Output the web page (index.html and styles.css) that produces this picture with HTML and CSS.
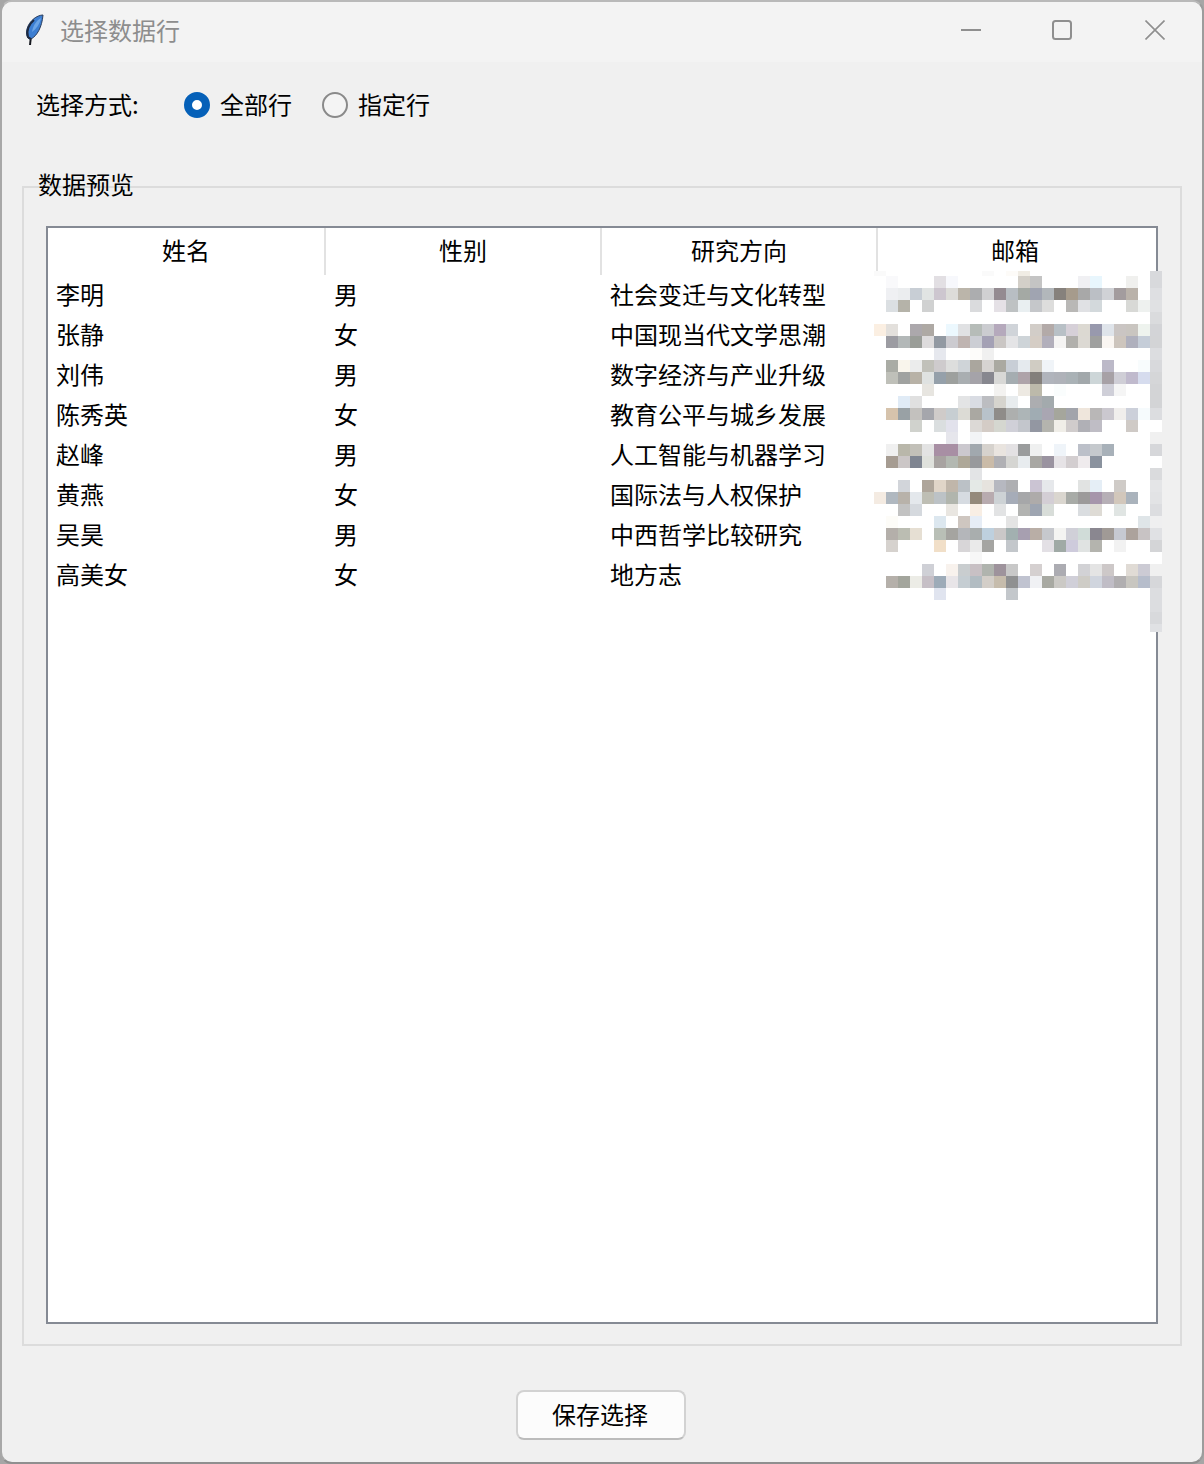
FILE: index.html
```html
<!DOCTYPE html>
<html lang="zh-CN">
<head>
<meta charset="utf-8">
<title>选择数据行</title>
<link rel="stylesheet" href="styles.css">
</head>
<body>
<div class="window">
  <header class="titlebar">
    <svg class="app-icon" width="20" height="32" viewBox="0 0 20 32" aria-hidden="true">
      <path class="quill" d="M6 31 L7 22"/>
      <path class="vane" d="M19 1 C13 1 5 7 3 15 C2 19 2.5 23 5 25 L7 25 C13 22 18 13 19 1Z"/>
      <path class="vane-light" d="M17 4 C13 6 9 11 8 18 C12 15 16 10 17 4Z"/>
      <path class="vane-edge" d="M10 6 C5 10 2 17 4 23 L7 25"/>
    </svg>
    <span class="title">选择数据行</span>
    <div class="caption">
      <svg class="cap-icon" width="20" height="20" viewBox="0 0 20 20" aria-hidden="true"><path d="M0 10H20"/></svg>
      <svg class="cap-icon" width="20" height="20" viewBox="0 0 20 20" aria-hidden="true"><rect x="1" y="1" width="18" height="18" rx="2.5"/></svg>
      <svg class="cap-icon thin" width="20" height="20" viewBox="0 0 20 20" aria-hidden="true"><path d="M0.5 0.5L19.5 19.5M19.5 0.5L0.5 19.5"/></svg>
    </div>
  </header>

  <main class="content">
    <div class="mode">
      <span class="mode-label">选择方式:</span>
      <label class="radio"><span class="dot dot-on"></span><span class="radio-text">全部行</span></label>
      <label class="radio"><span class="dot"></span><span class="radio-text">指定行</span></label>
    </div>

    <section class="group">
      <span class="legend">数据预览</span>
      <div class="tree">
        <table class="grid">
          <thead>
            <tr><th class="c1">姓名</th><th class="c2">性别</th><th class="c3">研究方向</th><th class="c4">邮箱</th></tr>
          </thead>
          <tbody>
            <tr><td>李明</td><td>男</td><td>社会变迁与文化转型</td><td></td></tr>
            <tr><td>张静</td><td>女</td><td>中国现当代文学思潮</td><td></td></tr>
            <tr><td>刘伟</td><td>男</td><td>数字经济与产业升级</td><td></td></tr>
            <tr><td>陈秀英</td><td>女</td><td>教育公平与城乡发展</td><td></td></tr>
            <tr><td>赵峰</td><td>男</td><td>人工智能与机器学习</td><td></td></tr>
            <tr><td>黄燕</td><td>女</td><td>国际法与人权保护</td><td></td></tr>
            <tr><td>吴昊</td><td>男</td><td>中西哲学比较研究</td><td></td></tr>
            <tr><td>高美女</td><td>女</td><td>地方志</td><td></td></tr>
          </tbody>
        </table>
        <svg class="mosaic" width="288" height="361" viewBox="0 0 288 361" aria-hidden="true">
          <g transform="translate(0 -7)"><rect x="0" fill="#fafafa"/><rect x="108" fill="#fafafa"/><rect x="132" fill="#fdfbf8"/><rect x="144" fill="#f0ece4"/><rect x="276" fill="#d8d9dc"/></g>
          <g transform="translate(0 5)"><rect x="12" fill="#f9f9fb"/><rect x="60" fill="#e2dfe3"/><rect x="72" fill="#f7f8fc"/><rect x="144" fill="#d3cfc8"/><rect x="156" fill="#c4c4c4"/><rect x="204" fill="#f0f0f3"/><rect x="216" fill="#e8f6fd"/><rect x="252" fill="#f0f0ee"/><rect x="276" fill="#d8d9dc"/></g>
          <g transform="translate(0 17)"><rect x="12" fill="#eff0f3"/><rect x="24" fill="#ebedef"/><rect x="36" fill="#c8ced5"/><rect x="48" fill="#e1e4e3"/><rect x="60" fill="#cdc6cf"/><rect x="72" fill="#dddcd9"/><rect x="84" fill="#bbb5aa"/><rect x="96" fill="#acadaf"/><rect x="108" fill="#d0d0d2"/><rect x="120" fill="#948b91"/><rect x="132" fill="#b8bec3"/><rect x="144" fill="#a4a9a4"/><rect x="156" fill="#a0a4b1"/><rect x="168" fill="#b2b7bb"/><rect x="180" fill="#86817c"/><rect x="192" fill="#a69b8c"/><rect x="204" fill="#a8a8a8"/><rect x="216" fill="#bbbfc5"/><rect x="228" fill="#d0d2d6"/><rect x="240" fill="#a39c9e"/><rect x="252" fill="#bab2aa"/><rect x="276" fill="#dedfe2"/></g>
          <g transform="translate(0 29)"><rect x="12" fill="#dbdfe2"/><rect x="24" fill="#b5b3a9"/><rect x="48" fill="#d0d1d1"/><rect x="96" fill="#dadbdd"/><rect x="120" fill="#e5e1e6"/><rect x="132" fill="#bec2c3"/><rect x="144" fill="#e9eff1"/><rect x="156" fill="#c5c7ca"/><rect x="168" fill="#dddddc"/><rect x="192" fill="#b9b8b6"/><rect x="204" fill="#e0e1e4"/><rect x="216" fill="#d3d9dc"/><rect x="252" fill="#d8d9d6"/><rect x="264" fill="#eef1ef"/><rect x="276" fill="#e0e1e3"/></g>
          <g transform="translate(0 41)"><rect x="276" fill="#dadbdd"/></g>
          <g transform="translate(0 53)"><rect x="0" fill="#fbefe2"/><rect x="12" fill="#e3e0dc"/><rect x="36" fill="#aca8ac"/><rect x="48" fill="#aea9a4"/><rect x="72" fill="#ecf8fe"/><rect x="84" fill="#e0e1e3"/><rect x="96" fill="#b6bcb8"/><rect x="108" fill="#cbccd0"/><rect x="120" fill="#b5a9bc"/><rect x="132" fill="#d0d4d9"/><rect x="156" fill="#d2cdc8"/><rect x="168" fill="#b3aaa8"/><rect x="180" fill="#b8c0c6"/><rect x="192" fill="#d6d0d8"/><rect x="204" fill="#dcd9d2"/><rect x="216" fill="#9899ad"/><rect x="228" fill="#dfe4ea"/><rect x="240" fill="#cac5c3"/><rect x="252" fill="#c9c5c0"/><rect x="264" fill="#eef3ee"/><rect x="276" fill="#d3d4d7"/></g>
          <g transform="translate(0 65)"><rect x="12" fill="#9c9ca2"/><rect x="24" fill="#b3b8b8"/><rect x="36" fill="#9a9d98"/><rect x="48" fill="#dddbdc"/><rect x="60" fill="#9299a2"/><rect x="72" fill="#cccbd0"/><rect x="84" fill="#bfb4b1"/><rect x="96" fill="#ccced4"/><rect x="108" fill="#a4a1b5"/><rect x="120" fill="#cac6c4"/><rect x="132" fill="#e4e4e6"/><rect x="144" fill="#ced4d8"/><rect x="156" fill="#d5cdc5"/><rect x="168" fill="#b2afbb"/><rect x="180" fill="#f5f4f3"/><rect x="192" fill="#b1b0ac"/><rect x="204" fill="#dcd9d3"/><rect x="216" fill="#9fa09f"/><rect x="228" fill="#faf6f2"/><rect x="240" fill="#cdc5bd"/><rect x="252" fill="#afb0bd"/><rect x="264" fill="#c5cdd8"/><rect x="276" fill="#d3d4d6"/></g>
          <g transform="translate(0 77)"><rect x="60" fill="#e6e8ee"/><rect x="96" fill="#fdfcfa"/><rect x="108" fill="#f0f0f0"/><rect x="276" fill="#dcdde0"/></g>
          <g transform="translate(0 89)"><rect x="12" fill="#aaaca5"/><rect x="24" fill="#f9f5ec"/><rect x="36" fill="#ebecec"/><rect x="48" fill="#c1c1ba"/><rect x="60" fill="#cecbcd"/><rect x="72" fill="#dddedd"/><rect x="84" fill="#cfd4d8"/><rect x="96" fill="#aaa69e"/><rect x="108" fill="#d6d3d1"/><rect x="120" fill="#aaa9a1"/><rect x="132" fill="#c8ced6"/><rect x="144" fill="#e5eaee"/><rect x="156" fill="#d0ccc3"/><rect x="168" fill="#f0f4f8"/><rect x="228" fill="#bcb9c8"/><rect x="264" fill="#f8fcfd"/><rect x="276" fill="#d8d9dc"/></g>
          <g transform="translate(0 101)"><rect x="12" fill="#bfc0b9"/><rect x="24" fill="#a0a2a0"/><rect x="36" fill="#b8b2a7"/><rect x="48" fill="#dfe2e1"/><rect x="60" fill="#95a0aa"/><rect x="72" fill="#9da09e"/><rect x="84" fill="#a9aeb1"/><rect x="96" fill="#a5a3a9"/><rect x="108" fill="#87878f"/><rect x="120" fill="#d8d8d6"/><rect x="132" fill="#a5adb1"/><rect x="144" fill="#aea3a9"/><rect x="156" fill="#837f7b"/><rect x="168" fill="#b0b4bc"/><rect x="180" fill="#afb2b9"/><rect x="192" fill="#aab2b6"/><rect x="204" fill="#a2a8ab"/><rect x="216" fill="#cdd6d8"/><rect x="228" fill="#a7a1a6"/><rect x="240" fill="#cfced6"/><rect x="252" fill="#c0bacd"/><rect x="264" fill="#d6dcee"/><rect x="276" fill="#d5d6d8"/></g>
          <g transform="translate(0 113)"><rect x="48" fill="#e7e5e0"/><rect x="120" fill="#f3f2f0"/><rect x="144" fill="#ede9e2"/><rect x="156" fill="#bcb9aa"/><rect x="180" fill="#fafdfd"/><rect x="228" fill="#cfcfd8"/><rect x="240" fill="#f5f5f5"/><rect x="276" fill="#d3d4d6"/></g>
          <g transform="translate(0 125)"><rect x="24" fill="#e0ebf6"/><rect x="36" fill="#e0e0e0"/><rect x="84" fill="#e3e4e5"/><rect x="96" fill="#d9dce3"/><rect x="108" fill="#bcbdc1"/><rect x="120" fill="#d6d4ce"/><rect x="132" fill="#e8ecee"/><rect x="156" fill="#acadb0"/><rect x="168" fill="#a3aaad"/><rect x="276" fill="#d3d4d6"/></g>
          <g transform="translate(0 137)"><rect x="12" fill="#d6c3ac"/><rect x="24" fill="#99a1a5"/><rect x="36" fill="#c3c1be"/><rect x="48" fill="#a5a6ac"/><rect x="60" fill="#cfcbc9"/><rect x="72" fill="#c7ced2"/><rect x="84" fill="#dcdbd5"/><rect x="96" fill="#aaa8a2"/><rect x="108" fill="#b8c2ca"/><rect x="120" fill="#8f8c89"/><rect x="132" fill="#adafae"/><rect x="144" fill="#adb5b7"/><rect x="156" fill="#a0acb3"/><rect x="168" fill="#a9a6b2"/><rect x="180" fill="#a5a69c"/><rect x="192" fill="#a2a4ab"/><rect x="204" fill="#efe6dc"/><rect x="216" fill="#b9b7b7"/><rect x="228" fill="#cbc8cf"/><rect x="240" fill="#f0eeec"/><rect x="252" fill="#ccd0da"/><rect x="264" fill="#f6fbfd"/><rect x="276" fill="#dcdde0"/></g>
          <g transform="translate(0 149)"><rect x="36" fill="#d0d2cd"/><rect x="60" fill="#dadedf"/><rect x="72" fill="#e2e2ec"/><rect x="96" fill="#dcd9d6"/><rect x="108" fill="#d4ccc6"/><rect x="120" fill="#d5d7d0"/><rect x="132" fill="#d0d0d8"/><rect x="144" fill="#c3c6cc"/><rect x="156" fill="#9397a2"/><rect x="168" fill="#b4b4ae"/><rect x="180" fill="#f0eee8"/><rect x="192" fill="#d0cccc"/><rect x="204" fill="#b0b0b6"/><rect x="216" fill="#bfbdc5"/><rect x="252" fill="#cfcac6"/></g>
          <g transform="translate(0 161)"><rect x="72" fill="#e6e6ec"/><rect x="96" fill="#f2f4f6"/><rect x="276" fill="#f0f0f0"/></g>
          <g transform="translate(0 173)"><rect x="12" fill="#f0f0f0"/><rect x="24" fill="#b9b7aa"/><rect x="36" fill="#c2c0b8"/><rect x="48" fill="#e3e3e3"/><rect x="60" fill="#a88fa4"/><rect x="72" fill="#a88fa4"/><rect x="84" fill="#cbc8ce"/><rect x="96" fill="#a1a8ae"/><rect x="108" fill="#d6d2cd"/><rect x="120" fill="#e9e4df"/><rect x="132" fill="#e3e1e3"/><rect x="144" fill="#9a9c9d"/><rect x="156" fill="#eff0f0"/><rect x="180" fill="#eff4f9"/><rect x="204" fill="#bcc0c9"/><rect x="216" fill="#c5c9cd"/><rect x="228" fill="#a8b1b9"/><rect x="276" fill="#d6d7da"/></g>
          <g transform="translate(0 185)"><rect x="12" fill="#a69c92"/><rect x="24" fill="#cbc6c6"/><rect x="36" fill="#7f8591"/><rect x="48" fill="#dfe1dc"/><rect x="60" fill="#a8a3a1"/><rect x="72" fill="#b3b8b1"/><rect x="84" fill="#aea899"/><rect x="96" fill="#98999c"/><rect x="108" fill="#cabba8"/><rect x="120" fill="#b0b0b4"/><rect x="132" fill="#d5d5d2"/><rect x="144" fill="#e8ecef"/><rect x="156" fill="#a8a7a3"/><rect x="168" fill="#9a93a0"/><rect x="180" fill="#e6e3e6"/><rect x="192" fill="#d3ced0"/><rect x="204" fill="#efebed"/><rect x="216" fill="#8a929e"/></g>
          <g transform="translate(0 197)"><rect x="96" fill="#e3e4e6"/><rect x="276" fill="#dadbdd"/></g>
          <g transform="translate(0 209)"><rect x="24" fill="#d2d5da"/><rect x="48" fill="#aea59a"/><rect x="60" fill="#e0d5c8"/><rect x="72" fill="#c0b6aa"/><rect x="84" fill="#bbc1c6"/><rect x="96" fill="#e4e9e6"/><rect x="108" fill="#e6e3de"/><rect x="120" fill="#b6b8c0"/><rect x="132" fill="#aeafb2"/><rect x="156" fill="#cbc4d3"/><rect x="168" fill="#e6e8eb"/><rect x="204" fill="#e1e3e2"/><rect x="216" fill="#e5eef6"/><rect x="240" fill="#cfcbc7"/><rect x="276" fill="#e4e5e7"/></g>
          <g transform="translate(0 221)"><rect x="0" fill="#f4ebe2"/><rect x="12" fill="#b0b8c0"/><rect x="24" fill="#b8b2aa"/><rect x="36" fill="#e4e8ec"/><rect x="48" fill="#bebeb4"/><rect x="60" fill="#bcc2c6"/><rect x="72" fill="#b1b5ad"/><rect x="84" fill="#d6dbe1"/><rect x="96" fill="#948a7b"/><rect x="108" fill="#b8abaf"/><rect x="120" fill="#cdd2d5"/><rect x="132" fill="#a6acb8"/><rect x="144" fill="#a6a7a9"/><rect x="156" fill="#aeabaa"/><rect x="168" fill="#d3ced5"/><rect x="180" fill="#dad6cf"/><rect x="192" fill="#a8aba7"/><rect x="204" fill="#9c9a9a"/><rect x="216" fill="#a695ab"/><rect x="228" fill="#b6afb6"/><rect x="240" fill="#d2c7bb"/><rect x="252" fill="#aab3bc"/><rect x="276" fill="#e2e3e5"/></g>
          <g transform="translate(0 233)"><rect x="24" fill="#c2c2c2"/><rect x="36" fill="#d5d9de"/><rect x="72" fill="#e9e6e1"/><rect x="96" fill="#f8eee4"/><rect x="120" fill="#e2e3e4"/><rect x="144" fill="#b2b3b1"/><rect x="156" fill="#9ea5b1"/><rect x="168" fill="#d8ddd9"/><rect x="204" fill="#dadde0"/><rect x="216" fill="#dedbd5"/><rect x="240" fill="#e0e5e3"/><rect x="276" fill="#dcdde0"/></g>
          <g transform="translate(0 245)"><rect x="12" fill="#fdfcf8"/><rect x="60" fill="#dce7ef"/><rect x="84" fill="#cec6c0"/><rect x="96" fill="#e6edf6"/><rect x="132" fill="#e4e4e4"/><rect x="264" fill="#dfe5e8"/><rect x="276" fill="#efeff0"/></g>
          <g transform="translate(0 257)"><rect x="12" fill="#b4afaa"/><rect x="24" fill="#bbbdb2"/><rect x="36" fill="#e6dfd3"/><rect x="60" fill="#b9bfb6"/><rect x="72" fill="#a5a4a0"/><rect x="84" fill="#b4b6ba"/><rect x="96" fill="#a9aeae"/><rect x="108" fill="#bed0de"/><rect x="120" fill="#cac8c8"/><rect x="132" fill="#a2b0b0"/><rect x="144" fill="#a79fb0"/><rect x="156" fill="#b9aea6"/><rect x="168" fill="#c6c8cd"/><rect x="180" fill="#f4f4f2"/><rect x="192" fill="#d0d0d8"/><rect x="204" fill="#d0dcd8"/><rect x="216" fill="#8a8790"/><rect x="228" fill="#a09a96"/><rect x="240" fill="#c6c9d2"/><rect x="252" fill="#aca29c"/><rect x="264" fill="#c8c3c4"/><rect x="276" fill="#e0e1e4"/></g>
          <g transform="translate(0 269)"><rect x="12" fill="#d6d2ce"/><rect x="60" fill="#f1dfc8"/><rect x="84" fill="#d8d6d8"/><rect x="96" fill="#eaeaea"/><rect x="108" fill="#a5a5a2"/><rect x="132" fill="#c3c7cb"/><rect x="168" fill="#e3e0e5"/><rect x="180" fill="#a0aaa6"/><rect x="192" fill="#cecbdc"/><rect x="204" fill="#e0e3e2"/><rect x="216" fill="#b4b4ae"/><rect x="240" fill="#f2f2f2"/><rect x="276" fill="#d4d5d7"/></g>
          <g transform="translate(0 281)"><rect x="96" fill="#f7f7f7"/></g>
          <g transform="translate(0 293)"><rect x="48" fill="#cfd0d6"/><rect x="72" fill="#f8f2ed"/><rect x="84" fill="#c9cdcf"/><rect x="96" fill="#c8c0c4"/><rect x="108" fill="#b0b4ae"/><rect x="120" fill="#9e939c"/><rect x="132" fill="#c8c8c8"/><rect x="156" fill="#d5d0d0"/><rect x="180" fill="#acacb2"/><rect x="204" fill="#d2d2d5"/><rect x="216" fill="#e4e4e4"/><rect x="228" fill="#cdc8c8"/><rect x="252" fill="#e0dbd5"/><rect x="264" fill="#cccbd4"/><rect x="276" fill="#f0f0f0"/></g>
          <g transform="translate(0 305)"><rect x="12" fill="#b5b0aa"/><rect x="24" fill="#a3a59c"/><rect x="36" fill="#ecece6"/><rect x="48" fill="#c6bfc6"/><rect x="60" fill="#9dabb8"/><rect x="72" fill="#e8e5e8"/><rect x="84" fill="#c5cdd2"/><rect x="96" fill="#b2bcc2"/><rect x="108" fill="#d3cec8"/><rect x="120" fill="#c6bcac"/><rect x="132" fill="#8f9091"/><rect x="144" fill="#c0c3d0"/><rect x="156" fill="#f0f1f4"/><rect x="168" fill="#a8a9a2"/><rect x="180" fill="#cbc9c5"/><rect x="192" fill="#d0cfd8"/><rect x="204" fill="#ceccc6"/><rect x="216" fill="#d0d5de"/><rect x="228" fill="#c0bdc6"/><rect x="240" fill="#b0aeb0"/><rect x="252" fill="#c8c6c0"/><rect x="264" fill="#b6bdcb"/><rect x="276" fill="#d6d7da"/></g>
          <g transform="translate(0 317)"><rect x="60" fill="#e0e4ef"/><rect x="132" fill="#c3c7cb"/><rect x="276" fill="#dcdde0"/></g>
          <g transform="translate(0 329)"><rect x="276" fill="#dcdde0"/></g>
          <g transform="translate(0 341)"><rect x="276" fill="#d8d9dc"/></g>
          <g transform="translate(0 353)"><rect x="276" fill="#e0e1e4"/></g>
        </svg>
      </div>
    </section>

    <div class="actions">
      <button class="save" type="button"><span class="save-text">保存选择</span></button>
    </div>
  </main>
</div>
</body>
</html>
```

FILE: styles.css
```css
* { box-sizing: border-box; }

html, body {
  margin: 0;
  height: 100%;
}

body {
  background: #a6a6a6;
  font-family: "Noto Sans CJK SC", "Liberation Sans", sans-serif;
  font-size: 24px;
  color: #000;
  overflow: hidden;
}

.window {
  height: 1464px;
  display: flex;
  flex-direction: column;
  background: #f0f0f0;
  border-style: solid;
  border-width: 2px;
  border-color: #b9b9b9 #9c9c9c #8f8f8f #a8a8a8;
  border-radius: 12px;
  overflow: hidden;
}

.titlebar {
  flex: 0 0 60px;
  display: flex;
  align-items: center;
  background: #f3f3f3;
  padding: 0 0 4px 22px;
}

.app-icon { flex: none; }
.quill { fill: none; stroke: #15181f; stroke-width: 2; }
.vane { fill: #3c7ed2; stroke: #2c3f5e; stroke-width: 1; }
.vane-light { fill: #6ba4e6; }
.vane-edge { fill: none; stroke: #1e2a40; stroke-width: 2; }

.title {
  margin-left: 16px;
  color: #8d8d8d;
  line-height: 32px;
}

.caption {
  margin-left: auto;
  margin-right: 37px;
  display: flex;
  gap: 71px;
}
.cap-icon { fill: none; stroke: #8f8f8f; stroke-width: 2; }
.cap-icon.thin { stroke-width: 1.6; margin-left: 2px; }

.content {
  flex: 1;
  display: flex;
  flex-direction: column;
  padding: 0 20px;
}

.mode {
  display: flex;
  align-items: center;
  height: 36px;
  margin-top: 25px;
  padding-left: 14px;
}
.mode-label { width: 148px; padding-bottom: 4px; }

.radio {
  display: flex;
  align-items: center;
  gap: 10px;
  margin-right: 30px;
}
.radio-text { padding-bottom: 4px; }

.dot {
  width: 26px;
  height: 26px;
  border-radius: 50%;
  border: 2px solid #8a8a8a;
  background: #f4f4f4;
}
.dot-on {
  border: 8px solid #0560b8;
  background: #fff;
}

.group {
  position: relative;
  margin-top: 63px;
  height: 1160px;
  border: 2px solid #dcdcdc;
  padding: 38px 22px 20px;
}

.legend {
  position: absolute;
  left: 14px;
  top: -19px;
  line-height: 30px;
}

.tree {
  position: relative;
  height: 1098px;
  background: #fff;
  border: 2px solid #858a94;
}

.grid {
  width: 100%;
  table-layout: fixed;
  border-collapse: separate;
  border-spacing: 0;
}
.grid th {
  height: 47px;
  padding: 0 0 4px;
  font-weight: 400;
  text-align: center;
  border-right: 2px solid #e2e2e2;
}
.grid th:last-child { border-right: 0; }
.c1 { width: 278px; }
.c2, .c3 { width: 276px; }
.grid th.c4 { padding-right: 4px; }
.grid td {
  height: 40px;
  padding: 0 0 2px 8px;
  line-height: 30px;
}

.mosaic {
  position: absolute;
  left: 826px;
  top: 43px;
  background: #fff;
}
.mosaic rect { y: 0; width: 12px; height: 12px; }

.actions {
  display: flex;
  justify-content: center;
  margin-top: 44px;
  padding-right: 2px;
}

.save {
  width: 170px;
  height: 50px;
  font: inherit;
  color: #000;
  background: #fcfcfc;
  border: 2px solid #d2d2d2;
  border-bottom-color: #bcbcbc;
  border-radius: 8px;
  padding: 0 2px 4px 0;
}
```
